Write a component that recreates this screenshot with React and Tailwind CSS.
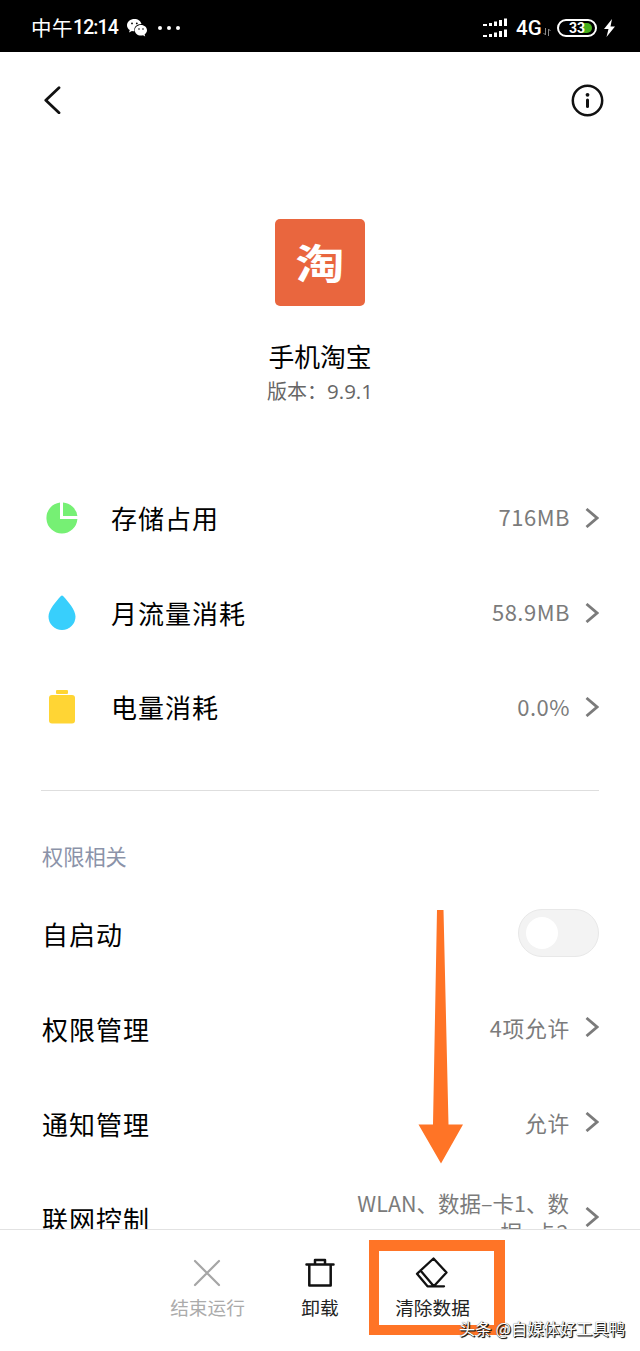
import React, { useState } from "react";

const usageRows = [
    { icon: "storage", label: "存储占用", value: "716MB" },
    { icon: "data", label: "月流量消耗", value: "58.9MB" },
    { icon: "battery", label: "电量消耗", value: "0.0%" },
];

const permissionRows = [
    { label: "权限管理", value: "4项允许" },
    { label: "通知管理", value: "允许" },
];

const Chevron = () => (
    <svg width="14" height="20" viewBox="0 0 14 20" fill="none" stroke="#7b7b7b" strokeWidth="2.8" className="shrink-0 -mt-px">
        <path d="M1.5 1l10.5 9-10.5 9" />
    </svg>
);

const RowIcon = ({ name }) => {
    if (name === "storage") {
        return (
            <svg width="32" height="32" viewBox="0 0 32 32" fill="#76f074">
                <path d="M14 .6A15.5 15.5 0 1 0 31.4 17H14z" />
                <path d="M17 .5V14h14.4A15.5 15.5 0 0 0 17 .5z" />
            </svg>
        );
    }
    if (name === "data") {
        return (
            <svg width="28" height="36" viewBox="0 0 28 36" fill="#38cffc">
                <path d="M12.7 1.2q1.3-1.4 2.6 0C20 6.5 27.5 14.5 27.5 21.5a13.5 13.5 0 0 1-27 0C.5 14.5 8 6.5 12.7 1.2z" />
            </svg>
        );
    }
    return (
        <svg width="28" height="36" viewBox="0 0 28 36" fill="#ffd534">
            <rect x="8" y="0" width="12" height="4" rx="1" />
            <rect x="1" y="5" width="26" height="28.5" rx="3" />
        </svg>
    );
};

const StatusBar = () => (
    <div className="h-[52px] shrink-0 bg-black text-white flex items-center justify-between pl-[31px] pr-[25px] pt-1">
        <div className="flex items-center">
            <span className="text-[20.5px] leading-6 w-[87px] whitespace-nowrap flex">
                <span className="tracking-[0.5px]">中午</span>
                <span className="font-['Roboto',sans-serif] text-[19.5px] leading-[26px] font-medium tracking-[-0.9px]">12:14</span>
            </span>
            <svg width="20" height="18" viewBox="0 0 20 18" className="ml-[9px]">
                <path
                    fill="#fff"
                    d="M7.5 0C3.4 0 0 2.7 0 6.2c0 2 1.1 3.7 2.8 4.9L2 13.5l2.9-1.5c.9.2 1.8.3 2.6.3C6.5 8 9.8 5 14.5 5 13.8 2 11 0 7.5 0z"
                />
                <path
                    fill="#fff"
                    d="M14 6c-3.5 0-6.2 2.4-6.2 5.3s2.7 5.3 6.2 5.3c.7 0 1.4-.1 2-.3l2.2 1.2-.6-2c1.5-1 2.400-2.500 2.400-4.200C20 8.400 17.400 6 14 6z"
                />
                <g fill="#000">
                    <circle cx="5" cy="4.4" r="0.9" />
                    <circle cx="9.8" cy="4.4" r="0.9" />
                    <circle cx="12" cy="10" r="0.8" />
                    <circle cx="16" cy="10" r="0.8" />
                </g>
            </svg>
            <div className="flex gap-[5px] ml-[11px]">
                <span className="w-1 h-1 rounded-full bg-white" />
                <span className="w-1 h-1 rounded-full bg-white" />
                <span className="w-1 h-1 rounded-full bg-white" />
            </div>
        </div>
        <div className="flex items-center">
            <svg width="25" height="20" viewBox="0 0 25 20" fill="#fff">
                <path d="M0 6h4v2H0zM6 5h3v3H6zM11 3.5h3V8h-3zM16 2h3v6h-3zM21 .5h3V8h-3z" />
                <path d="M0 17h4v2H0zM6 16h3v3H6zM11 14.5h3V19h-3zM16 13h3v6h-3zM21 11.5h3V19h-3z" />
            </svg>
            <span className="text-[20.5px] leading-6 font-medium ml-2 w-[26px] font-['Roboto',sans-serif]">4G</span>
            <svg width="8" height="8" viewBox="0 0 8 8" fill="none" stroke="#888" className="mt-2 ml-px">
                <path d="M2.5 0v7L.5 5M5.5 8V1l2 2" />
            </svg>
            {/* Battery pill */}
            <div className="relative ml-1.5 w-10 h-[18px] rounded-full border-2 border-white flex items-center justify-center">
                <span className="absolute right-[3px] top-0.5 w-[10px] h-2.5 rounded-r-full bg-[#46ae1c]" />
                <span className="relative text-[14px] leading-[14px] font-bold font-['Roboto',sans-serif]">33</span>
            </div>
            <svg width="11" height="18" viewBox="0 0 11 18" fill="#fff" className="ml-[7px]">
                <path d="M8 0L0 10h4.5L2.5 18 11 7.5H6.5z" />
            </svg>
        </div>
    </div>
);

const App = () => {
    const [autoStart, setAutoStart] = useState(false);

    return (
        <div className="relative w-[640px] h-[1351px] bg-white text-black flex flex-col overflow-hidden font-['Noto_Sans_CJK_SC',sans-serif]">
            <StatusBar />

            <div className="flex-1 min-h-0 overflow-hidden">
                {/* Header */}
                <div className="h-24 flex items-center justify-between pl-11 pr-9">
                    <svg width="18" height="28" viewBox="0 0 18 28" fill="none" stroke="#111" strokeWidth="2.8" strokeLinecap="round" strokeLinejoin="round">
                        <path d="M15 1.7L1.8 14.2 15 26.7" />
                    </svg>
                    <svg width="33" height="33" viewBox="0 0 33 33" fill="none" stroke="#111" strokeWidth="2.5">
                        <circle cx="16.5" cy="16.5" r="14.7" />
                        <circle cx="16.5" cy="10.8" r="1.9" fill="#111" stroke="none" />
                        <path d="M16.5 16v6.5" strokeWidth="3" strokeLinecap="round" />
                    </svg>
                </div>

                {/* App info */}
                <div className="flex flex-col items-center pt-[71px] h-[323px]">
                    <div className="w-[90px] h-[87px] rounded-[5px] bg-[#e9663e] text-white flex items-center justify-center">
                        <span className="text-[49px] leading-none font-bold scale-y-[0.84] -translate-y-0.5">淘</span>
                    </div>
                    <h1 className="text-[25.8px] leading-9 mt-8">手机淘宝</h1>
                    <p className="text-[20px] leading-8 mt-px text-[#666] flex whitespace-nowrap">
                        <span>版本：</span>
                        <span className="text-[20.5px] font-['Open_Sans',sans-serif]">9.9.1</span>
                    </p>
                </div>

                {/* Usage */}
                {usageRows.map((row) => (
                    <div key={row.label} className="h-[94.8px] flex items-center pl-[42px] pr-[41px]">
                        <div className="w-10 flex justify-center">
                            <RowIcon name={row.icon} />
                        </div>
                        <span className="ml-[29px] -mt-px text-[26px] tracking-[1px] leading-9">{row.label}</span>
                        <span className="ml-auto mr-[15px] -mt-1 text-[22px] tracking-[0.5px] leading-8 text-[#7b7b7b]">{row.value}</span>
                        <Chevron />
                    </div>
                ))}

                <div className="mx-[41px] mt-[35px] h-px bg-[#dedede]" />
                <h2 className="ml-[42px] mt-[49px] h-8 leading-8 text-[21.2px] text-[#8b93a9]">权限相关</h2>

                {/* Permissions */}
                <div className="h-[95px] mt-[13px] flex items-center justify-between pl-[42px] pr-[41px]">
                    <span className="text-[26px] tracking-[1px] leading-9 mt-0.5">自启动</span>
                    <button
                        onClick={() => setAutoStart(!autoStart)}
                        className={`w-[81px] h-12 rounded-full border border-[#e8e8e8] p-[7px] flex items-center ${autoStart ? "bg-blue-500 justify-end" : "bg-[#f3f3f3]"}`}
                    >
                        <span className="w-8 h-8 rounded-full bg-white" />
                    </button>
                </div>
                {permissionRows.map((row) => (
                    <div key={row.label} className="h-[95px] flex items-center pl-[42px] pr-[41px]">
                        <span className="text-[26px] tracking-[1px] leading-9 mt-0.5">{row.label}</span>
                        <span className="ml-auto mr-[15px] text-[21.7px] tracking-[0.8px] leading-8 text-[#7b7b7b]">{row.value}</span>
                        <Chevron />
                    </div>
                ))}
                <div className="h-[95px] flex items-center pl-[42px] pr-[41px]">
                    <span className="text-[26px] tracking-[1px] leading-9 mt-0.5">联网控制</span>
                    <span className="ml-auto mr-4 text-right text-[21.5px] leading-[29px] -mt-px text-[#7b7b7b]">
                        <span className="block whitespace-nowrap">WLAN、数据–卡1、数</span>
                        <span className="block tracking-[0.5px]">据–卡2</span>
                    </span>
                    <Chevron />
                </div>
            </div>

            {/* Bottom actions */}
            <div className="h-[122px] shrink-0 border-t border-[#e2e2e2] flex justify-center text-[18.7px] text-[#222]">
                <button className="w-[112.5px] pt-[27px] flex flex-col items-center text-[#ababab]">
                    <svg width="32" height="32" viewBox="0 0 32 32" fill="none" stroke="#a6a6a6" strokeWidth="2.2" strokeLinecap="round" className="-ml-0.5">
                        <path d="M4 4l24 24M28 4L4 28" />
                    </svg>
                    <span className="leading-7 mt-1">结束运行</span>
                </button>
                <button className="w-[112.5px] pt-[27px] flex flex-col items-center">
                    <svg width="32" height="32" viewBox="0 0 32 32" fill="none" stroke="#111" strokeWidth="2.5" strokeLinecap="round" strokeLinejoin="round">
                        <path d="M2.5 7.5h27M11 7.5V3h10v4.5M5.3 7.5v21h21.4v-21" />
                    </svg>
                    <span className="leading-7 mt-1">卸载</span>
                </button>
                <button className="w-[112.5px] pt-[27px] flex flex-col items-center">
                    <svg width="34" height="32" viewBox="0 0 34 32" fill="none" stroke="#111" strokeWidth="2.3" strokeLinecap="round" strokeLinejoin="round" className="-ml-0.5">
                        <path d="M18.5 1.5L31.5 15.5 18.8 29.3H12.5L2 16.8zM5.5 13.5L18.8 29.3H29" />
                    </svg>
                    <span className="leading-7 mt-1">清除数据</span>
                </button>
            </div>

            {/* Tutorial marks over the screen */}
            <svg width="46" height="254" viewBox="0 0 46 254" fill="#ff7426" className="absolute left-[418px] top-[910px]">
                <path d="M19 0h6.5l5 214.5H45L23 253.5.5 214.5H15z" />
            </svg>
            <div className="absolute left-[369px] top-[1240px] w-[136px] h-[95px] border-[10px] border-t-[11px] border-r-[11px] border-[#ff7426]" />
            <div className="absolute left-[459px] top-[1316px] text-[16.3px] leading-6 text-white whitespace-nowrap flex gap-1 [text-shadow:1px_1px_0_#222,1px_1px_1px_#000,0_0_1px_#444]">
                <span>头条</span>
                <span>@自媒体好工具鸭</span>
            </div>
        </div>
    );
};

export default App;
